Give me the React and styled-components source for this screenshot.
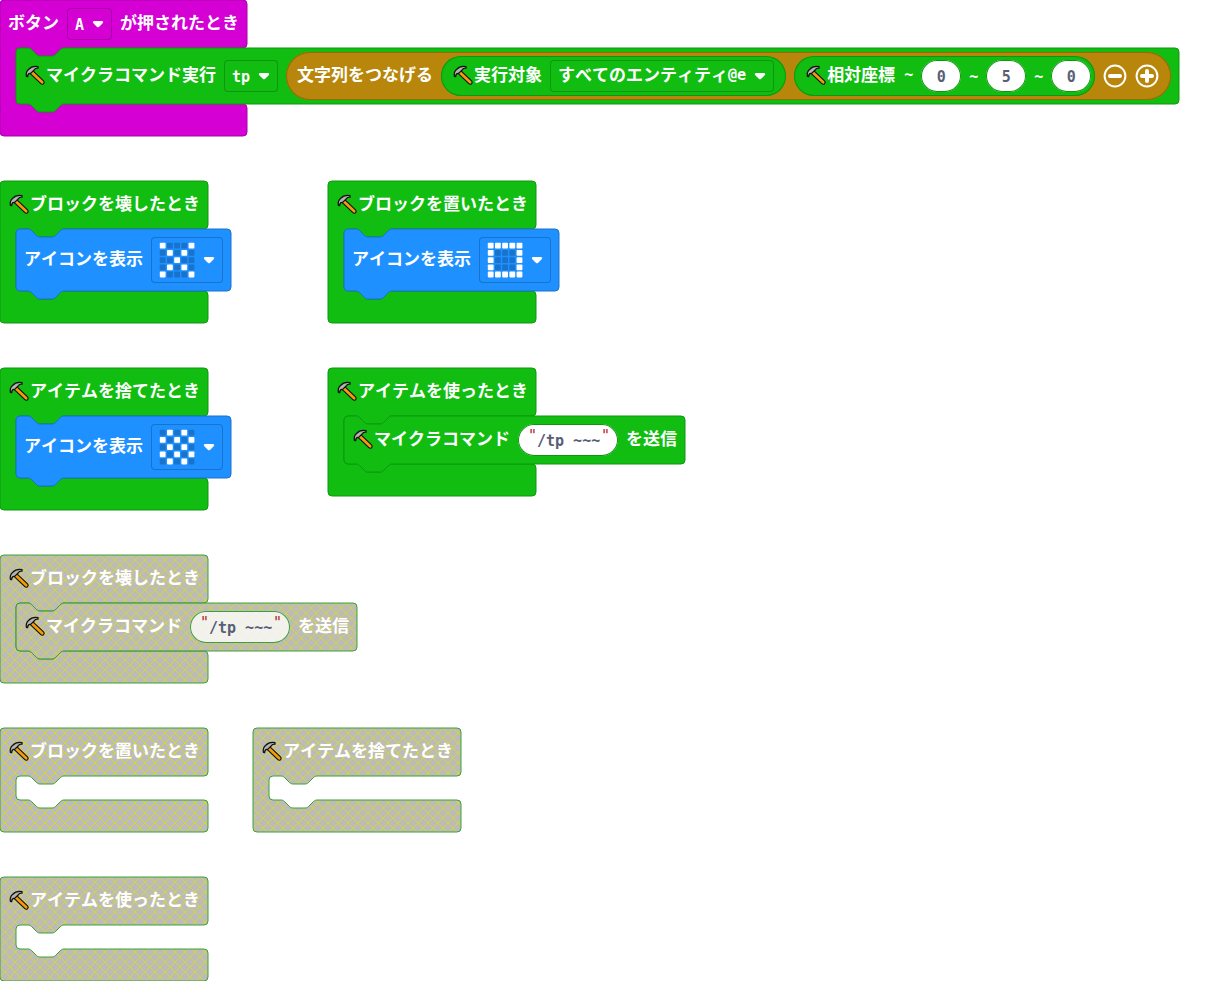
import React, { useLayoutEffect, useRef, useState } from 'react';
import styled, { createGlobalStyle } from 'styled-components';

const GlobalStyle = createGlobalStyle`
  *, *::before, *::after { box-sizing: border-box; }
  body {
    margin: 0;
    background: #fff;
    overflow: hidden;
  }
`;

const palette = {
  input: { fill: '#d400d4', line: '#aa00aa' },
  craft: { fill: '#11bd11', line: '#0e970e' },
  basic: { fill: '#1e90ff', line: '#1873cc' },
  text: { fill: '#b8860b', line: '#936b09' },
  off: { fill: 'url(#disabled-hatch)', line: '#3ba03b' },
};

const NOTCH = 'c2,0 3,1 4,2 l4,4 c1,1 2,2 4,2 h12 c2,0 3,-1 4,-2 l4,-4 c1,-1 2,-2 4,-2';
const NOTCH_BACK = 'c-2,0 -3,1 -4,2 l-4,4 c-1,1 -2,2 -4,2 h-12 c-2,0 -3,-1 -4,-2 l-4,-4 c-1,-1 -2,-2 -4,-2';

const Workspace = styled.main`
  display: flex;
  flex-direction: column;
  gap: 45px;
  color: #fff;
  font-family: "Noto Sans CJK JP", sans-serif;
  font-size: 17px;
  font-weight: 700;
  font-kerning: none;
  line-height: 24px;
`;

const BlockRow = styled.div`
  display: flex;
  align-items: flex-start;
  gap: ${(p) => (p.$wide ? '120px' : '45px')};
`;

const HatFrame = styled.section`
  position: relative;
  width: max-content;
`;

const Outline = styled.svg`
  position: absolute;
  inset: 0;
  width: 100%;
  height: 100%;
  overflow: visible;
  pointer-events: none;
`;

const Head = styled.header`
  position: relative;
  display: flex;
  align-items: center;
  gap: 8px;
  height: 48px;
  padding: 0 8px;
`;

const Mouth = styled.div`
  position: relative;
  width: 0;
  min-width: 100%;
  min-height: 24px;
  padding-left: 16px;
`;

const Foot = styled.div`
  height: 32px;
`;

const CommandFrame = styled.div`
  position: relative;
  width: max-content;
`;

const CommandBody = styled.div`
  position: relative;
  display: flex;
  align-items: center;
  gap: 8px;
  min-height: 48px;
  padding: ${(p) => (p.$tight ? '4px 8px' : '8px')};
`;

const Reporter = styled.div`
  display: flex;
  align-items: center;
  gap: 8px;
  padding: 4px ${(p) => (p.$endsInSlot ? '4px' : '12px')} 4px 11px;
  border-radius: 24px;
  background: ${(p) => palette[p.$tone].fill};
  box-shadow: inset 0 0 0 1px ${(p) => palette[p.$tone].line};
`;

const Label = styled.span`
  display: flex;
  align-items: center;
  white-space: pre;
  padding-bottom: 4px;
`;

const Mono = styled.span`
  padding-top: 2px;
  font-family: "DejaVu Sans Mono", monospace;
  font-size: 15px;
  white-space: pre;
`;

const HammerArt = styled.svg`
  flex: none;
  width: 22px;
  height: 24px;
`;

const Dropdown = styled.label`
  position: relative;
  display: flex;
  align-items: center;
  gap: 8px;
  height: 32px;
  padding: 0 8px;
  border-radius: 4px;
  box-shadow: inset 0 0 0 1px ${(p) => palette[p.$tone].line};
`;

const NativeSelect = styled.select`
  position: absolute;
  inset: 0;
  width: 100%;
  height: 100%;
  opacity: 0;
  font: inherit;
  cursor: pointer;
`;

const IconPickerButton = styled.button`
  display: flex;
  align-items: center;
  gap: 8px;
  height: 46px;
  padding: 0 8px;
  border: 0;
  border-radius: 4px;
  background: transparent;
  box-shadow: inset 0 0 0 1px ${palette.basic.line};
`;

const ArrowArt = styled.svg`
  flex: none;
  width: 12px;
  height: 12px;
`;

const LedArt = styled.svg`
  width: 36px;
  height: 36px;
`;

const NumberInput = styled.input`
  width: 40px;
  height: 32px;
  padding: 2px 0 0;
  border: 0;
  border-radius: 16px;
  background: #fff;
  box-shadow: inset 0 0 0 1px ${palette.craft.line};
  color: #575e75;
  font: 700 15px "DejaVu Sans Mono", monospace;
  text-align: center;
`;

const TextSlot = styled.label`
  display: flex;
  align-items: center;
  height: 32px;
  padding: 0 8px 0 10px;
  border-radius: 16px;
  background: ${(p) => (p.$off ? 'rgba(255, 255, 255, 0.8)' : '#fff')};
  box-shadow: inset 0 0 0 1px ${(p) => (p.$off ? palette.off.line : palette.craft.line)};
`;

const Quote = styled.span`
  align-self: flex-start;
  width: 9px;
  color: #b52a2a;
  font: 400 15px/24px "DejaVu Sans Mono", monospace;
  text-align: center;
`;

const TextInput = styled.input`
  width: 64px;
  height: 24px;
  padding: 2px 0 0;
  border: 0;
  background: transparent;
  color: #575e75;
  font: 700 15px "DejaVu Sans Mono", monospace;
`;

const RoundButton = styled.button`
  display: flex;
  width: 24px;
  height: 24px;
  padding: 0;
  border: 0;
  background: transparent;
`;

function useSize() {
  const ref = useRef(null);
  const [size, setSize] = useState({ width: 208, height: 48 });
  useLayoutEffect(() => {
    const el = ref.current;
    const read = () => setSize({ width: el.offsetWidth, height: el.offsetHeight });
    read();
    const observer = new ResizeObserver(read);
    observer.observe(el);
    return () => observer.disconnect();
  }, []);
  return [ref, size];
}

function hatPath({ width, height }) {
  const r = width - 4;
  const mouthEnd = height - 32;
  return [
    `M0,4 a4,4 0 0 1 4,-4 H${r} a4,4 0 0 1 4,4 V44 a4,4 0 0 1 -4,4 H64`,
    NOTCH_BACK,
    `H20 a4,4 0 0 0 -4,4 V${mouthEnd - 4} a4,4 0 0 0 4,4 H28`,
    NOTCH,
    `H${r} a4,4 0 0 1 4,4 V${height - 4} a4,4 0 0 1 -4,4 H4 a4,4 0 0 1 -4,-4 z`,
  ].join(' ');
}

function commandPath({ width, height }) {
  return [
    'M0,4 a4,4 0 0 1 4,-4 H12',
    NOTCH,
    `H${width - 4} a4,4 0 0 1 4,4 V${height - 4} a4,4 0 0 1 -4,4 H48`,
    NOTCH_BACK,
    'H4 a4,4 0 0 1 -4,-4 z',
  ].join(' ');
}

function Shape({ d, tone }) {
  return (
    <Outline aria-hidden="true">
      <path d={d} fill={palette[tone].fill} fillOpacity={tone === 'off' ? 0.8 : 1} stroke={palette[tone].line} />
    </Outline>
  );
}

function Hat({ tone, head, children }) {
  const [ref, size] = useSize();
  return (
    <HatFrame ref={ref}>
      <Shape d={hatPath(size)} tone={tone} />
      <Head>{head}</Head>
      <Mouth>{children}</Mouth>
      <Foot />
    </HatFrame>
  );
}

function Command({ tone, tight, children }) {
  const [ref, size] = useSize();
  return (
    <CommandFrame ref={ref}>
      <Shape d={commandPath(size)} tone={tone} />
      <CommandBody $tight={tight}>{children}</CommandBody>
    </CommandFrame>
  );
}

function Hammer() {
  return (
    <HammerArt viewBox="0 -2 22 24" aria-hidden="true">
      <path d="M7.4 8 L18.2 18.2" stroke="#111" strokeWidth="5" strokeLinecap="round" />
      <path d="M7.4 8 L18.2 18.2" stroke="#f59b0b" strokeWidth="2.7" strokeLinecap="round" />
      <path
        d="M2.4 12.4 C1.8 9.4 2.8 6.8 4.8 5.2 C6.8 2.9 10.4 1.9 14 2.6 L14 4.2 C12 4 10.8 4.8 10.2 6 L6.6 9.4 C4.8 9 3.8 10.2 3.6 12.6 Z"
        fill="#b4b4b4"
        stroke="#111"
        strokeWidth="1.3"
        strokeLinejoin="round"
      />
    </HammerArt>
  );
}

function Arrow() {
  return (
    <ArrowArt viewBox="0 0 12 12" aria-hidden="true">
      <path d="M2 3 H10 Q12 3.4 10.9 5 L7.2 8.7 Q6 9.7 4.8 8.7 L1.1 5 Q0 3.4 2 3 Z" fill="#fff" />
    </ArrowArt>
  );
}

function Select({ tone, name, value, children }) {
  return (
    <Dropdown $tone={tone}>
      {children}
      <Arrow />
      <NativeSelect aria-label={name} defaultValue={value}>
        <option value={value}>{value}</option>
      </NativeSelect>
    </Dropdown>
  );
}

function IconPicker({ pattern }) {
  return (
    <IconPickerButton type="button" aria-haspopup="listbox" aria-label="アイコン">
      <LedArt viewBox="0 0 36 36" aria-hidden="true">
        {pattern.flatMap((line, y) =>
          [...line].map((dot, x) => (
            <rect
              key={`${x}-${y}`}
              x={0.8 + x * 7.2}
              y={0.8 + y * 7.2}
              width="5.8"
              height="5.8"
              rx="0.8"
              fill={dot === '#' ? '#fff' : '#1873cc'}
            />
          ))
        )}
      </LedArt>
      <Arrow />
    </IconPickerButton>
  );
}

function ShowIcon({ pattern }) {
  return (
    <Command tone="basic">
      <Label>アイコンを表示</Label>
      <IconPicker pattern={pattern} />
    </Command>
  );
}

function CraftTitle({ children }) {
  return (
    <Label>
      <Hammer />
      {children}
    </Label>
  );
}

function SendCommand({ off }) {
  return (
    <Command tone={off ? 'off' : 'craft'}>
      <CraftTitle>マイクラコマンド</CraftTitle>
      <TextSlot $off={off}>
        <Quote>"</Quote>
        <TextInput aria-label="マイクラコマンド" defaultValue="/tp ~~~" spellCheck={false} />
        <Quote>"</Quote>
      </TextSlot>
      <Label>を送信</Label>
    </Command>
  );
}

function CraftHat({ off, title, children }) {
  return (
    <Hat tone={off ? 'off' : 'craft'} head={<CraftTitle>{title}</CraftTitle>}>
      {children}
    </Hat>
  );
}

function ToggleButton({ plus }) {
  return (
    <RoundButton type="button" aria-label={plus ? '追加' : '削除'}>
      <svg width="24" height="24" viewBox="0 0 24 24" aria-hidden="true">
        <circle cx="12" cy="12" r="10.4" fill="none" stroke="#fff" strokeWidth="2" />
        <path d={plus ? 'M7 12 H17 M12 7 V17' : 'M7 12 H17'} stroke="#fff" strokeWidth="4" strokeLinecap="round" />
      </svg>
    </RoundButton>
  );
}

function HatchDefs() {
  return (
    <Outline aria-hidden="true">
      <defs>
        <pattern id="disabled-hatch" patternUnits="userSpaceOnUse" width="10" height="10">
          <rect width="10" height="10" fill="#aaa" />
          <path d="M0 0 L10 10 M10 0 L0 10" stroke="#cc0" />
        </pattern>
      </defs>
    </Outline>
  );
}

const CROSS = ['#...#', '.#.#.', '..#..', '.#.#.', '#...#'];
const SQUARE = ['#####', '#...#', '#...#', '#...#', '#####'];
const CHECKER = ['.#.#.', '#.#.#', '.#.#.', '#.#.#', '.#.#.'];

export default function App() {
  return (
    <Workspace>
      <GlobalStyle />
      <HatchDefs />
      <BlockRow>
        <Hat
          tone="input"
          head={
            <>
              <Label>ボタン</Label>
              <Select tone="input" name="ボタン" value="A">
                <Mono>A</Mono>
              </Select>
              <Label>が押されたとき</Label>
            </>
          }
        >
          <Command tone="craft" tight>
            <CraftTitle>マイクラコマンド実行</CraftTitle>
            <Select tone="craft" name="コマンド" value="tp">
              <Mono>tp</Mono>
            </Select>
            <Reporter $tone="text">
              <Label>文字列をつなげる</Label>
              <Reporter $tone="craft">
                <CraftTitle>実行対象</CraftTitle>
                <Select tone="craft" name="実行対象" value="すべてのエンティティ@e">
                  <Label>
                    すべてのエンティティ<Mono>@e</Mono>
                  </Label>
                </Select>
              </Reporter>
              <Reporter $tone="craft" $endsInSlot>
                <CraftTitle>
                  相対座標<Mono> ~</Mono>
                </CraftTitle>
                <NumberInput aria-label="x" defaultValue="0" />
                <Mono>~</Mono>
                <NumberInput aria-label="y" defaultValue="5" />
                <Mono>~</Mono>
                <NumberInput aria-label="z" defaultValue="0" />
              </Reporter>
              <ToggleButton />
              <ToggleButton plus />
            </Reporter>
          </Command>
        </Hat>
      </BlockRow>

      <BlockRow $wide>
        <CraftHat title="ブロックを壊したとき">
          <ShowIcon pattern={CROSS} />
        </CraftHat>
        <CraftHat title="ブロックを置いたとき">
          <ShowIcon pattern={SQUARE} />
        </CraftHat>
      </BlockRow>

      <BlockRow $wide>
        <CraftHat title="アイテムを捨てたとき">
          <ShowIcon pattern={CHECKER} />
        </CraftHat>
        <CraftHat title="アイテムを使ったとき">
          <SendCommand />
        </CraftHat>
      </BlockRow>

      <BlockRow>
        <CraftHat off title="ブロックを壊したとき">
          <SendCommand off />
        </CraftHat>
      </BlockRow>

      <BlockRow>
        <CraftHat off title="ブロックを置いたとき" />
        <CraftHat off title="アイテムを捨てたとき" />
      </BlockRow>

      <BlockRow>
        <CraftHat off title="アイテムを使ったとき" />
      </BlockRow>
    </Workspace>
  );
}
